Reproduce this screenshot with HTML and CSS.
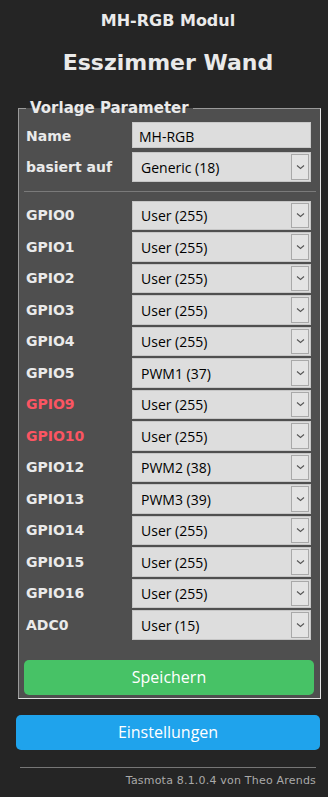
FILE: index.html
```html
<!DOCTYPE html>
<html lang="de">
<head>
  <meta charset="UTF-8">
  <meta name="viewport" content="width=device-width, initial-scale=1.0">
  <title>MH-RGB Modul - Vorlage</title>
  <link rel="stylesheet" href="styles.css">
</head>
<body>
  <div class="page">
    <h3 class="modul">MH-RGB Modul</h3>
    <h2 class="geraet">Esszimmer Wand</h2>

    <fieldset class="vorlage">
      <legend>Vorlage Parameter</legend>
      <div class="grid">
        <label>Name</label>
        <input type="text" class="feld" value="MH-RGB">

        <label>basiert auf</label>
        <div class="sel"><select><option>Generic (18)</option></select><span class="pfeil"><svg width="9" height="6" viewBox="0 0 9 6"><path d="M1 1.5 L4.5 4.5 L8 1.5" fill="none" stroke="#555" stroke-width="1.1"/></svg></span></div>
      </div>

      <hr class="trenner">

      <div class="grid gpio" id="gpioListe"></div>

      <button type="button" class="btn gruen">Speichern</button>
    </fieldset>

    <button type="button" class="btn blau">Einstellungen</button>

    <div class="fuss">
      <hr>
      <span>Tasmota 8.1.0.4 von Theo Arends</span>
    </div>
  </div>

  <script>
    const pins = [
      ['GPIO0', 'User (255)'],
      ['GPIO1', 'User (255)'],
      ['GPIO2', 'User (255)'],
      ['GPIO3', 'User (255)'],
      ['GPIO4', 'User (255)'],
      ['GPIO5', 'PWM1 (37)'],
      ['GPIO9', 'User (255)', true],
      ['GPIO10', 'User (255)', true],
      ['GPIO12', 'PWM2 (38)'],
      ['GPIO13', 'PWM3 (39)'],
      ['GPIO14', 'User (255)'],
      ['GPIO15', 'User (255)'],
      ['GPIO16', 'User (255)'],
      ['ADC0', 'User (15)']
    ];

    const liste = document.getElementById('gpioListe');
    pins.forEach(([name, wert, warnung]) => {
      const label = document.createElement('label');
      label.textContent = name;
      if (warnung) label.className = 'rot';

      const sel = document.createElement('div');
      sel.className = 'sel';
      sel.innerHTML = `<select><option>${wert}</option></select><span class="pfeil"><svg width="9" height="6" viewBox="0 0 9 6"><path d="M1 1.5 L4.5 4.5 L8 1.5" fill="none" stroke="#555" stroke-width="1.1"/></svg></span>`;

      liste.appendChild(label);
      liste.appendChild(sel);
    });
  </script>
</body>
</html>
```

FILE: styles.css
```css
body {
  margin: 0;
  background: #252525;
  color: #eaeaea;
  font-family: "DejaVu Sans", Verdana, sans-serif;
}

.page {
  padding: 0 8px 0 16px;
  width: 304px;
}

.modul {
  text-align: center;
  font-size: 16px;
  margin: 11px 0 0;
  line-height: 20px;
}

.geraet {
  text-align: center;
  font-size: 22px;
  margin: 19px 0 0;
  line-height: 26px;
}

.vorlage {
  background: #4f4f4f;
  border: 1px solid #e2e2e2;
  border-color: #9a9a9a #e2e2e2 #e2e2e2 #9a9a9a;
  margin: 23px 2px 0;
  padding: 5px 4px 3px 7px;
}

.vorlage legend {
  font-weight: bold;
  font-size: 15px;
  padding: 0 4px;
  margin-left: 0;
  line-height: 18px;
}

.grid {
  display: grid;
  grid-template-columns: 106px 179px;
  row-gap: 3px;
  align-items: center;
}

.grid label {
  font-weight: bold;
  font-size: 14px;
}

.grid label.rot {
  color: #fb5562;
}

.gpio {
  row-gap: 2px;
}

.feld {
  height: 26px;
  box-sizing: border-box;
  border: 1px solid #c9c9c9;
  background: #dddddd;
  color: #000;
  padding: 2px 6px 0;
  font-family: "Open Sans", "Noto Sans", sans-serif;
  font-size: 14px;
  margin-bottom: 1px;
}

.sel {
  position: relative;
  height: 29.5px;
}

.sel select {
  appearance: none;
  -webkit-appearance: none;
  width: 100%;
  height: 100%;
  box-sizing: border-box;
  border: 1px solid #c6c6c6;
  border-radius: 0;
  background: #dddddd;
  color: #000;
  padding: 1px 0 0 8px;
  font-family: "Open Sans", "Noto Sans", sans-serif;
  font-size: 14px;
}

.pfeil {
  position: absolute;
  top: 2px;
  right: 2px;
  bottom: 2px;
  width: 16px;
  border: 1px solid #a9a9a9;
  background: #e4e4e4;
  display: flex;
  align-items: center;
  justify-content: center;
  pointer-events: none;
}

.trenner {
  border: 0;
  border-top: 1px solid #7a7a7a;
  margin: 9px 0 9px -2px;
  width: 292px;
}

.btn {
  display: block;
  width: 100%;
  border: 0;
  border-radius: 5px;
  color: #fff;
  font-family: "Open Sans", "Noto Sans", sans-serif;
  font-size: 16px;
  height: 35px;
  cursor: pointer;
}

.gruen {
  background: #47c266;
  margin: 20px 0 0;
  width: 290px;
  margin-left: -2px;
}

.blau {
  background: #1fa3ec;
  margin-top: 16px;
}

.fuss {
  text-align: right;
  font-size: 11px;
  color: #aaa;
  padding: 0 4px;
  letter-spacing: 0.2px;
}

.fuss hr {
  border: 0;
  border-top: 1px solid #777;
  margin: 17px 0 6px;
}
```
